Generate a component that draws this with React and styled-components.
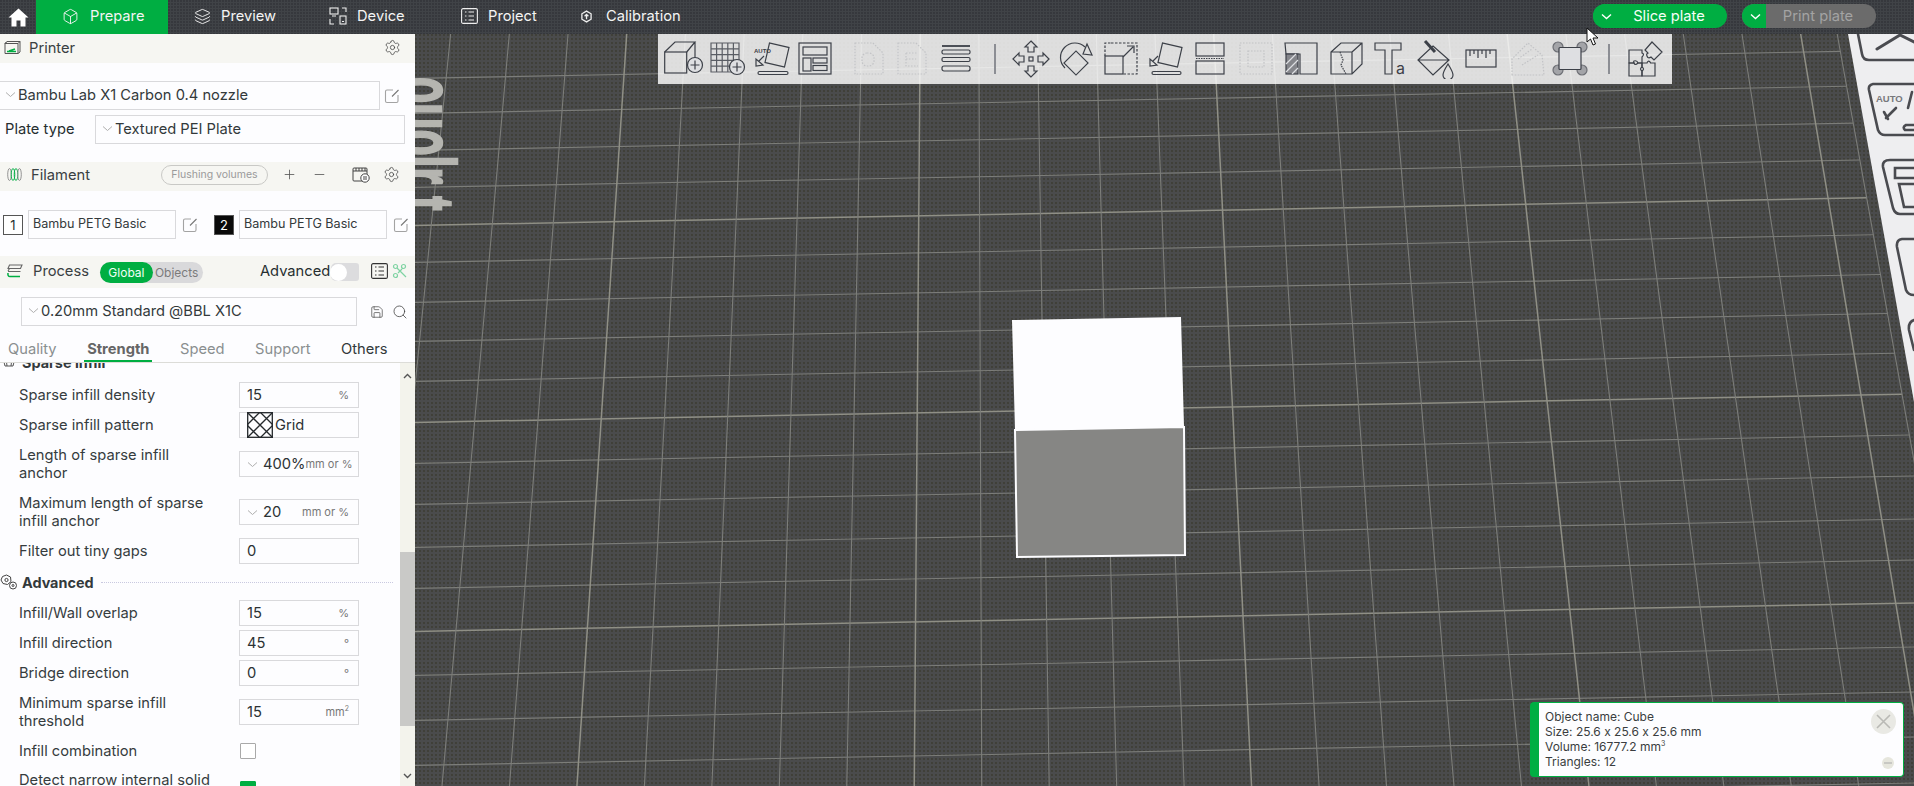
import React from "react";
import styled, { createGlobalStyle } from "styled-components";
import { Box, Layers, Settings, Save, Search, Plus, Minus } from "lucide-react";

const GREEN = "#00ae42";
const INK = "#262e30";
const EDGE = "#d9d9dc";
const BAND = "#f6f6f2";

const Global = createGlobalStyle`
  html, body { margin: 0; padding: 0; background: #4a4b4c; }
  * { box-sizing: border-box; }
  svg { flex: none; }
  body { font-family: Inter, "Noto Sans", sans-serif; color: ${INK}; font-feature-settings: "calt" 0; }
`;

const Page = styled.div`
  position: relative; width: 1914px; height: 786px; overflow: hidden;
  display: flex; flex-direction: column;
`;
const TopBar = styled.header`
  height: 34px; flex: none; display: flex; align-items: stretch;
  background-color: #404347;
  background-image: radial-gradient(circle at 1px 1px, #36383c .7px, transparent .9px);
  background-size: 3px 3px;
`;
const HomeBtn = styled.div`
  width: 36px; display: flex; align-items: center; justify-content: center;
`;
const MainTab = styled.div`
  width: ${p => p.$w}px; flex: none; display: flex; align-items: center;
  padding-left: ${p => p.$pad}px; gap: ${p => p.$gap}px; padding-bottom: 2px;
  font-size: 14.7px; color: #f4f4f4;
  background: ${p => (p.$active ? GREEN : "transparent")};
`;
const TopRight = styled.div`
  margin-left: auto; padding: 0 38px 2px 0; display: flex; align-items: center; gap: 15px;
`;
const SplitBtn = styled.div`
  width: 134px; height: 24px; border-radius: 12px; overflow: hidden; display: flex;
  font-size: 14.7px; background: ${p => (p.$off ? "#6b6b6b" : GREEN)};
  color: ${p => (p.$off ? "#a3a3a3" : "#f4fff6")};
`;
const SplitArrow = styled.div`
  width: 24px; flex: none; background: ${GREEN}; display: flex; align-items: center; justify-content: center; padding-left: 3px;
`;
const SplitLabel = styled.div`
  flex: 1; display: flex; align-items: center; justify-content: center; padding-right: 6px;
`;
const Body = styled.div`flex: 1; display: flex; min-height: 0;`;
const Side = styled.aside`
  width: 415px; flex: none; background: #fdfdff; display: flex; flex-direction: column; overflow: hidden;
`;
const Head = styled.div`
  height: ${p => p.$h || 29}px; flex: none; display: flex; align-items: center; background: ${BAND};
  font-size: 14.7px; margin-top: ${p => p.$top || 0}px; padding: 0 ${p => p.$right}px ${p => p.$lift || 2}px ${p => p.$pad}px;
`;
const HeadTitle = styled.span`margin-left: ${p => p.$ml}px; color: #3a4042; flex: none;`;
const Push = styled.span`margin-left: auto; display: flex; align-items: center;`;
const Tail = styled.span`display: flex; align-items: center; flex: none; margin-left: ${p => p.$ml || 0}px;`;
const Pill = styled.span`
  margin-left: 71px; height: 20px; width: 107px; flex: none; border: 1px solid #c9c9c6; border-radius: 10px;
  font-size: 10.5px; color: #9a9a9a; display: flex; align-items: center; justify-content: center; white-space: nowrap;
`;
const Seg = styled.span`
  margin: 2px 0 0 11px; width: 103px; height: 21px; flex: none; border-radius: 11px; background: #d9d9db; display: flex; align-items: center;
  font-size: 12px; color: #7b7b7b;
`;
const SegOn = styled.span`
  width: 53px; height: 21px; border-radius: 11px; background: ${GREEN}; color: #f2fff6; display: flex; align-items: center; justify-content: center;
`;
const SegOff = styled.span`margin-left: 2px;`;
const Switch = styled.span`
  margin: 2px 0 0 1px; width: 28px; height: 18px; flex: none; border-radius: 5px 3px 3px 5px; background: #dcdcde; display: flex; align-items: center;
`;
const Knob = styled.span`width: 17px; height: 17px; border-radius: 50%; background: #fff; margin-left: -1px;`;
const PickRow = styled.div`
  display: flex; align-items: center; flex: none; margin-top: ${p => p.$top}px; padding-left: ${p => p.$pad || 0}px;
`;
const PlateLabel = styled.span`width: 90px; font-size: 14.7px; padding-bottom: 2px;`;
const Combo = styled.div`
  height: 29px; width: ${p => p.$w}px; margin-left: ${p => p.$ml || 0}px; flex: none;
  border: 1px solid ${EDGE}; display: flex; align-items: center; padding: 0 0 2px ${p => p.$pad || 5}px;
  font-size: ${p => p.$fs || 14.7}px; white-space: nowrap; color: #33393b;
`;
const ComboText = styled.span`margin-left: 2px;`;
const NumBox = styled.span`
  width: 20px; height: 20px; flex: none; margin-left: ${p => p.$ml}px; display: flex; align-items: center; justify-content: center; font-size: 13px;
  border: 1px solid #555; background: ${p => (p.$dark ? "#0a0a0a" : "#fff")}; color: ${p => (p.$dark ? "#fff" : INK)};
`;
const IconSlot = styled.span`display: flex; margin-left: ${p => p.$ml}px;`;
const Tabs = styled.nav`
  height: 37px; flex: none; display: flex; align-items: stretch; gap: 30.5px; padding-left: 8px; border-bottom: 1px solid #dcdcd8; font-size: 14.7px;
`;
const Tab = styled.span`
  position: relative; display: flex; align-items: center; padding-top: 9px;
  color: ${p => p.$c}; font-weight: ${p => (p.$on ? 700 : 400)};
  ${p => p.$on ? `&::after { content: ""; position: absolute; left: -3px; right: -3px; bottom: 0; height: 2px; background: ${GREEN}; }` : ""}
`;
const Scroller = styled.div`flex: 1; min-height: 0; display: flex;`;
const ScrollContent = styled.div`flex: 1; overflow: hidden;`;
const Group = styled.div`
  height: 22px; display: flex; align-items: center; font-size: 14.4px; font-weight: 700; color: #33393b;
  margin-top: ${p => p.$top}px; padding: 0 7px 2px 0;
`;
const GroupName = styled.span`margin-left: 4px; white-space: nowrap;`;
const Dots = styled.span`flex: 1; border-top: 1px dotted #c9c9e0; margin-left: 7px;`;
const Row = styled.div`
  display: flex; align-items: center; min-height: 26px; margin-top: ${p => p.$top}px; padding-left: 19px; font-size: 14.7px; color: #363c3e;
`;
const Label = styled.div`width: 220px; flex: none; white-space: pre-line; line-height: 18px;`;
const Field = styled.div`
  width: 120px; height: 26px; flex: none; border: 1px solid ${EDGE}; display: flex; align-items: center; padding: 0 9px 0 7px; font-size: 14.7px; color: #2c3234;
`;
const Val = styled.span`margin-left: ${p => p.$ml || 0}px;`;
const Unit = styled.span`margin-left: auto; font-size: 11px; color: #777; white-space: nowrap;`;
const Patt = styled.span`display: flex; margin-right: 2px;`;
const Check = styled.div`
  width: 16px; height: 16px; margin-left: 1px; border: 1px solid ${p => (p.$on ? GREEN : "#a9a9a9")}; background: ${p => (p.$on ? GREEN : "#fff")}; border-radius: 1px;
`;
const ScrollBar = styled.div`
  width: 15px; flex: none; background: #f3f3ec; display: flex; flex-direction: column; align-items: center; padding-top: 10px;
`;
const Thumb = styled.div`width: 15px; height: 174px; margin-top: 173px; background: #c9c9c7;`;
const DownArrow = styled.span`display: flex; margin-top: 47px;`;
const Canvas = styled.main`
  position: relative; flex: 1; overflow: hidden; background-color: #4a4b4c;
  background-image: radial-gradient(circle at 1px 1px, #3f3f38 .7px, transparent .9px);
  background-size: 4px 4px;
`;
const Scene = styled.svg`position: absolute; inset: 0; width: 100%; height: 100%;`;
const Toolbar = styled.div`
  position: absolute; left: 243px; top: 0; width: 1014px; height: 50px; padding-left: 6px;
  background: rgba(255,255,255,.82); display: flex; align-items: center;
`;
const Tool = styled.svg`
  width: 40px; height: 40px; flex: none; fill: none; stroke: #3c4048; stroke-width: 1.2;
  margin-left: ${p => p.$ml}px;
`;
const Sep = styled.span`
  width: 1.5px; height: 30px; flex: none; background: #8c8e94; margin-left: ${p => p.$ml}px;
`;
const Toast = styled.div`
  position: absolute; right: 10px; bottom: 9px; width: 374px; height: 75px; border-radius: 4px;
  background: #fdfdff; border: 1px solid ${GREEN}; border-left: 9px solid ${GREEN}; padding: 6px 0 0 6px;
  font-size: 12px; line-height: 15px; color: #3a3d40;
`;
const ToastLine = styled.div`white-space: nowrap;`;
const Sup = styled.sup`font-size: 7px; line-height: 0;`;
const CloseBtn = styled.div`
  position: absolute; right: 7px; top: 6px; width: 25px; height: 25px; border-radius: 50%; background: #e9e9e4;
  display: flex; align-items: center; justify-content: center;
`;
const MinBtn = styled.div`
  position: absolute; right: 9px; bottom: 7px; width: 12px; height: 12px; border-radius: 50%; background: #e6e6dd; display: flex; align-items: center; justify-content: center;
`;
const Pointer = styled.svg`position: absolute; left: 1586px; top: 27px; width: 13px; height: 19px;`;

const Chev = ({ s = 11, c = "#aeaeae", w = 1 }) => (
  <svg width={s} height={s} viewBox="0 0 11 11" fill="none" stroke={c} strokeWidth={w}><path d="M1 3.5 L5.5 7.5 L10 3.5" /></svg>
);
const EditIcon = () => (
  <svg width="16" height="16" viewBox="0 0 16 16" fill="none" stroke="#a3a3a3" strokeWidth="1.1">
    <path d="M9 2 H3 Q1.5 2 1.5 3.5 V13 Q1.5 14.5 3 14.5 H12.5 Q14 14.5 14 13 V7" /><path d="M8 8.5 L14.5 2" stroke="#777" />
  </svg>
);
const HomeIcon = () => (
  <svg width="21" height="19" viewBox="0 0 21 19" fill="#fff"><path d="M10.5 0.5 L20.5 9.5 H17.5 V18.5 H12.5 V12.5 H8.5 V18.5 H3.5 V9.5 H0.5 Z" /></svg>
);
const DeviceIcon = () => (
  <svg width="18" height="18" viewBox="0 0 18 18" fill="none" stroke="#eee" strokeWidth="1.1">
    <rect x="1" y="1" width="8" height="6" /><path d="M3 9 H7 M13 1 H17 V5 M1 12 V17 H5" /><rect x="11" y="9" width="6" height="8" /><path d="M13 14.5 H15" />
  </svg>
);
const ProjectIcon = () => (
  <svg width="17" height="16" viewBox="0 0 17 16" fill="none" stroke="#eee" strokeWidth="1.1">
    <rect x="0.6" y="0.6" width="15.8" height="14.8" rx="1.5" /><path d="M4 4 H5.5 M4 8 H5.5 M4 12 H5.5 M7.5 4 H13 M7.5 8 H13 M7.5 12 H13" />
  </svg>
);
const CalibIcon = () => (
  <svg width="13" height="13" viewBox="0 0 24 24" fill="none" stroke="#eee" strokeWidth="2.4">
    <path d="M12 2 L20.5 7 V17 L12 22 L3.5 17 V7 Z" /><path d="M12 17 V8 M8.5 11.5 L12 8 L15.5 11.5" />
  </svg>
);
const PrinterIcon = () => (
  <svg width="17" height="15" viewBox="0 0 17 15" fill="none" stroke="#555" strokeWidth="1">
    <path d="M3 1.5 H16 V12 L14 13.5 H1 V3.5 Z M3 1.5 L1 3.5 H14 V13.5 M14 3.5 L16 1.5" /><path d="M3 11.5 H12 M5 11 L11 9" stroke={GREEN} strokeWidth="1.6" />
  </svg>
);
const FilamentIcon = () => (
  <svg width="15" height="15" viewBox="0 0 15 15" fill="none" strokeWidth="0.9">
    <ellipse cx="2.5" cy="7.5" rx="1.8" ry="6" stroke="#888" /><ellipse cx="6" cy="7.5" rx="1.8" ry="6" stroke={GREEN} /><ellipse cx="9" cy="7.5" rx="1.8" ry="6" stroke={GREEN} /><ellipse cx="12.5" cy="7.5" rx="1.8" ry="6" stroke="#888" />
  </svg>
);
const ProcessIcon = () => (
  <svg width="16" height="14" viewBox="0 0 16 14" fill="none" stroke="#666" strokeWidth="1.1">
    <path d="M2.5 1 H15 L13.5 4.5 H1 Z" /><path d="M1 7 L2.5 4.5 M13.5 7.5 H1" /><path d="M1 9 Q0.5 12.5 3 12.5 H13" stroke={GREEN} strokeWidth="1.5" />
  </svg>
);
const FlushIcon = () => (
  <svg width="18" height="16" viewBox="0 0 18 16" fill="none" stroke="#444" strokeWidth="1">
    <rect x="1" y="1" width="14" height="13" rx="1" /><path d="M1 4 H15 M4 1 V4 M7 1 V4 M10 1 V4 M13 1 V4" /><circle cx="13" cy="11" r="4.2" fill="#fff" /><path d="M11 10 H15 M11 12 H15" />
  </svg>
);
const ListIcon = () => (
  <svg width="17" height="16" viewBox="0 0 17 16" fill="none" stroke="#333" strokeWidth="1.1">
    <rect x="0.6" y="0.6" width="15.8" height="14.8" rx="1.5" /><path d="M4 4 H5.5 M4 8 H5.5 M4 12 H5.5 M7.5 4 H13 M7.5 8 H13 M7.5 12 H13" />
  </svg>
);
const TuneIcon = () => (
  <svg width="15" height="16" viewBox="0 0 15 16" fill="none" stroke="#7ed3a2" strokeWidth="1.2">
    <circle cx="3.5" cy="3.5" r="2" /><circle cx="11.5" cy="3.5" r="2" /><circle cx="3.5" cy="12.5" r="2" /><path d="M5 5 L14 14 M10 6 L6 10" />
  </svg>
);
const AdvGears = () => (
  <svg width="18" height="16" viewBox="0 0 18 16" fill="none" stroke="#444" strokeWidth="1">
    <path d="M6.5 1 L10.5 3 L11 7.5 L7.5 10.5 L3 9.5 L1 6 L2.5 2.5 Z" /><circle cx="6.5" cy="6" r="1.6" /><circle cx="13" cy="11.5" r="3.5" /><circle cx="13" cy="11.5" r="1" />
  </svg>
);
const SparseIcon = () => (
  <svg width="18" height="16" viewBox="0 0 18 16" fill="none" stroke="#555" strokeWidth="1"><path d="M3 4 H15 L13 12 H5 Z M6 4 L7 12 M12 4 L11 12" /></svg>
);
const Hatch = () => (
  <svg width="26" height="26" viewBox="0 0 26 26" fill="none" stroke="#24282c" strokeWidth="1.3">
    <rect x="0.7" y="0.7" width="24.6" height="24.6" /><path d="M0 13 L13 0 L26 13 L13 26 Z M0 0 L26 26 M26 0 L0 26" />
  </svg>
);

const filled = { fill: "#3c4048", stroke: "none" };
const faded = { stroke: "#c2c3c6", strokeDasharray: "1.5 1.5" };
const cover = { fill: "#dedfe2" };
const corner = { fill: "#a3a4a8", stroke: "#6d6f75" };

const tools = [
  { c: 684, d: <><rect x="0.7" y="13" width="22" height="21" /><path d="M0.7 13 L11 3 H31 L22.7 13 M31 3 V20" /><circle cx="31" cy="26" r="7.5" {...cover} /><path d="M26.5 26 H35.5 M31 21.5 V30.5" /></> },
  { c: 727, d: <><path d="M4 4 H32 V33 H4 Z M9.6 4 V33 M15.2 4 V33 M20.8 4 V33 M26.4 4 V33 M4 9.8 H32 M4 15.6 H32 M4 21.4 H32 M4 27.2 H32" stroke="#5a5d64" /><circle cx="30" cy="28" r="7.5" {...cover} /><path d="M25.5 28 H34.5 M30 23.5 V32.5" /></> },
  { c: 772, d: <><rect x="15" y="6" width="20" height="20" transform="rotate(13 25 16)" /><text x="2" y="14" fontFamily="Liberation Sans, sans-serif" fontSize="6" fontWeight="700" {...filled}>AUTO</text><path d="M12 17 L7 22 M4 20 L4 27 L11 26 Z" /><rect x="6" y="32.5" width="30" height="3" rx="1.5" /></> },
  { c: 815, d: <><rect x="4" y="4" width="32" height="31" /><rect x="8" y="8" width="24" height="8" /><rect x="8" y="19" width="8" height="13" /><rect x="18" y="19" width="14" height="5" /><rect x="18" y="26.5" width="14" height="5" /></> },
  { c: 869, d: <g {...faded}><path d="M6 4 H24 L34 14 V35 H6 Z" /><rect x="13" y="14" width="12" height="13" rx="5" /></g> },
  { c: 912, d: <g {...faded}><path d="M6 4 H24 L34 14 V35 H6 Z" /><path d="M14 14 H26 M14 14 V27 H26 M14 20 H24" /></g> },
  { c: 956, d: <><path d="M6 7 H34" strokeWidth="1.8" /><rect x="6" y="11" width="28" height="4" rx="1.5" /><rect x="6" y="18.5" width="28" height="4" rx="1.5" /><rect x="6" y="27" width="28" height="5" rx="2" /></> },
  { c: 995, sep: true },
  { c: 1031, d: <><rect x="18" y="18" width="4" height="4" />{[0, 90, 180, 270].map(a => <path key={a} transform={`rotate(${a} 20 20)`} d="M20 2 L26 8 H23 V13 H17 V8 H14 Z" />)}</> },
  { c: 1076, d: <><path d="M9 29 A14 14 0 0 1 29 8" /><path d="M31 5 L36 16 L27 15 Z" /><rect x="11.5" y="15.5" width="17" height="17" transform="rotate(45 20 24)" /></> },
  { c: 1121, d: <><path d="M10 4 H36 V35 H22 M4 17 V4 H10" strokeDasharray="2.5 1.5" /><rect x="4" y="17" width="18" height="18" /><path d="M22 18 L32 8 M26 7 H33 V14" /></> },
  { c: 1166, d: <><rect x="14" y="6" width="20" height="20" transform="rotate(13 24 16)" /><path d="M12 17 L7 22 M4 20 L4 27 L11 26 Z" /><rect x="6" y="32.5" width="29" height="3" rx="1.5" /></> },
  { c: 1210, d: <><rect x="6" y="4" width="28" height="13" /><rect x="6" y="22" width="28" height="13" /><path d="M6 19.5 H34" strokeDasharray="1.5 1" /></> },
  { c: 1256, d: <g {...faded}><rect x="4" y="4" width="32" height="31" /><rect x="12" y="12" width="16" height="16" /></g> },
  { c: 1301, d: <><path d="M4 4 H36 V35 H19 V15 H5 Z" /><rect x="5" y="15" width="12" height="20" fill="#85868b" /><path d="M5 25 L15 15 M5 33 L17 21 M11 35 L17 29" stroke="#dedfe2" /></> },
  { c: 1346, d: <><path d="M5 13 L15 4 H36 V25 L26 35 H5 Z M5 13 H26 V35 M26 13 L36 4" /><path d="M14 13 L17 21 L15 26 L20 35" strokeDasharray="1.5 1" /></> },
  { c: 1391, d: <><path d="M4 4 H30 V11 H21 V35 H14 V11 H4 Z" /><text x="25" y="35" fontFamily="Inter, sans-serif" fontSize="16" {...filled}>a</text></> },
  { c: 1436, d: <><path d="M17 7 L33 21 L17 36 L2 21 Z M2 21 H33" /><path d="M9 2 L19 13" strokeWidth="3" /><path d="M32 25 Q27 33 27 36 A5 5 0 0 0 37 36 Q37 33 32 25 Z" /></> },
  { c: 1481, d: <><rect x="5" y="11" width="30" height="17" /><path d="M9 11 V17 M13 11 V15 M17 11 V19 M21 11 V15 M25 11 V19 M29 11 V15" /></> },
  { c: 1528, d: <g {...faded}><path d="M4 36 V20 L20 4 L34 16 L36 36 Z M10 20 L24 10 M14 26 L30 16" /></g> },
  { c: 1570, d: <><circle cx="8" cy="8" r="5" {...corner} /><circle cx="32" cy="8" r="5" {...corner} /><circle cx="8" cy="31" r="5" {...corner} /><circle cx="32" cy="31" r="5" {...corner} /><rect x="9" y="8.5" width="22" height="22" rx="1" {...cover} /></> },
  { c: 1609, sep: true },
  { c: 1645, d: <><path d="M4 11 H17 V14 Q20 15 17 18 V24 H13 Q12 21 9 22 Q8 23 9 24 H4 Z" /><path d="M4 24 H9 Q10 27 13 24 H17 V28 Q14 30 17 32 V37 H4 Z" /><path d="M17 24 H22 Q23 21 25 23 Q26 24 25 24 H30 V37 H17 V32 Q20 30 17 28 Z" /><path d="M27 3 L37 13 L29 21 L26 18 Q23 20 22 17 Q21 15 23 14 L20 11 Z" /></> },
];

const hy = [73, 108, 145, 182, 220, 257, 297, 336, 376, 417, 458, 499, 542, 583, 626, 670, 715, 760, 806];
const vx = Array.from({ length: 24 }, (_, i) => 448 + 59 * i);
const bandAt = y => 1848 + (y - 34) * 0.18;
const edgeAt = y => 1837 + (y - 33) * 0.18;
const vAt = (x60, y) => 960 + ((x60 - 960) * (y + 5000)) / 5060;
const SLOPE = 0.019;
const rightEnd = y700 => {
  const y = y700 - SLOPE * 1150;
  const x = edgeAt(y);
  return Math.min(x, 1914);
};

const Grid = () => (
  <g fill="none">
    {hy.map((y, i) => {
      const x2 = rightEnd(y);
      return <line key={i} x1="400" y1={y + SLOPE * 300} x2={x2} y2={y - SLOPE * (x2 - 700)} stroke={i % 5 === 4 ? "#8f8f85" : "#7c7d79"} strokeWidth={i % 5 === 4 ? 1.5 : 1.1} />;
    })}
    {vx.map((x, i) => (
      <line key={i} x1={vAt(x, 34)} y1="34" x2={vAt(x, 786)} y2="786" stroke={i % 5 === 3 ? "#8f8f85" : "#7c7d79"} strokeWidth={i % 5 === 3 ? 1.5 : 1.1} />
    ))}
    <line x1={edgeAt(34)} y1="34" x2={edgeAt(500)} y2="500" stroke="#7c7d79" strokeWidth="1.1" />
  </g>
);

const PlateGlyphs = () => (
  <text transform="translate(400 77) rotate(90) scale(.55 1)" fontFamily="Liberation Sans, sans-serif" fontWeight="700" fontSize="78" fill="#b5b5b0" stroke="#b5b5b0" strokeWidth="2.5">ouolr  t</text>
);

const RightBand = () => (
  <g>
    <polygon points={`${bandAt(34)},34 1914,34 1914,402`} fill="#eeeef0" />
    <g fill="none" stroke="#4a4b50" strokeWidth="2.6" strokeLinecap="round">
      <path d="M1858 34 L1862 54 Q1863 60 1869 60 H1914" />
      <path d="M1877 49 L1900 35 L1914 42" strokeWidth="3" />
      <path d="M1914 84 H1873 Q1868 85 1869 90 L1878 130 Q1880 135 1885 135 H1914" />
      <path d="M1914 168 H1895 V178 H1914 M1914 184 H1899 L1904 207 H1914" />
      <path d="M1914 160 H1890 Q1882 160 1883 167 L1893 208 Q1895 214 1900 214 H1914" />
      <path d="M1914 239 H1902 Q1896 240 1897 247 L1906 290 Q1908 295 1914 295" />
      <path d="M1914 320 Q1908 322 1909 330 L1914 350" />
      <path d="M1914 125 H1906 Q1902 127 1905 130 H1914" />
      <path d="M1908 108 L1912 92" />
      <path d="M1886 118 L1896 108 M1884 112 L1888 119" />
    </g>
    <text x="1876" y="102" fontFamily="Liberation Sans, sans-serif" fontWeight="700" fontSize="9.5" fill="#77787c">AUTO</text>
  </g>
);

const Cube = () => (
  <g>
    <polygon points="1012,320 1181,317 1184,427 1015,430" fill="#fdfdff" />
    <polygon points="1015,430 1184,427 1185,555 1017,557" fill="#868684" stroke="#fdfdff" strokeWidth="2" />
  </g>
);

const rows = [
  { k: "g1", group: "Sparse infill", top: -11, icon: <SparseIcon /> },
  { k: "a", label: "Sparse infill density", top: 8, val: "15", unit: "%" },
  { k: "b", label: "Sparse infill pattern", top: 4, grid: true },
  { k: "c", label: "Length of sparse infill\nanchor", top: 8, val: "400%", unit: "mm or %", combo: true },
  { k: "d", label: "Maximum length of sparse\ninfill anchor", top: 12, val: "20", unit: "mm or %", combo: true },
  { k: "e", label: "Filter out tiny gaps", top: 8, val: "0" },
  { k: "g2", group: "Advanced", top: 8, icon: <AdvGears />, dots: true },
  { k: "f", label: "Infill/Wall overlap", top: 6, val: "15", unit: "%" },
  { k: "g", label: "Infill direction", top: 4, val: "45", unit: "°" },
  { k: "h", label: "Bridge direction", top: 4, val: "0", unit: "°" },
  { k: "i", label: "Minimum sparse infill\nthreshold", top: 8, val: "15", unit: <>mm<Sup>2</Sup></> },
  { k: "j", label: "Infill combination", top: 8, check: "off" },
  { k: "l", label: "Detect narrow internal solid\ninfill", top: 7, check: "on" },
];

const SettingRow = ({ r }) => {
  if (r.group) {
    return (
      <Group $top={r.top}>
        {r.icon}
        <GroupName>{r.group}</GroupName>
        {r.dots && <Dots />}
      </Group>
    );
  }
  return (
    <Row $top={r.top}>
      <Label>{r.label}</Label>
      {r.check ? <Check $on={r.check === "on"} /> : (
        <Field>
          {r.combo && <Chev />}
          {r.grid && <Patt><Hatch /></Patt>}
          {r.grid ? "Grid" : <Val $ml={r.combo ? 5 : 0}>{r.val}</Val>}
          {r.unit && <Unit>{r.unit}</Unit>}
        </Field>
      )}
    </Row>
  );
};

export default function App() {
  return (
    <Page>
      <Global />
      <TopBar>
        <HomeBtn><HomeIcon /></HomeBtn>
        <MainTab $w={132} $pad={26} $gap={11} $active><Box size={17} strokeWidth={1.3} />Prepare</MainTab>
        <MainTab $w={121} $pad={26} $gap={10}><Layers size={17} strokeWidth={1.3} />Preview</MainTab>
        <MainTab $w={132} $pad={40} $gap={10}><DeviceIcon />Device</MainTab>
        <MainTab $w={119} $pad={40} $gap={10}><ProjectIcon />Project</MainTab>
        <MainTab $w={180} $pad={40} $gap={13}><CalibIcon />Calibration</MainTab>
        <TopRight>
          <SplitBtn><SplitArrow><Chev c="#fff" w={1.4} /></SplitArrow><SplitLabel>Slice plate</SplitLabel></SplitBtn>
          <SplitBtn $off><SplitArrow><Chev c="#fff" w={1.4} /></SplitArrow><SplitLabel>Print plate</SplitLabel></SplitBtn>
        </TopRight>
      </TopBar>
      <Body>
        <Side>
          <Head $pad={4} $right={14}>
            <PrinterIcon /><HeadTitle $ml={8}>Printer</HeadTitle>
            <Push><Settings size={17} strokeWidth={1.1} color="#444" /></Push>
          </Head>
          <PickRow $top={18}>
            <Combo $w={381} $ml={-1}><Chev /><ComboText>Bambu Lab X1 Carbon 0.4 nozzle</ComboText></Combo>
            <IconSlot $ml={4}><EditIcon /></IconSlot>
          </PickRow>
          <PickRow $top={5} $pad={5}>
            <PlateLabel>Plate type</PlateLabel>
            <Combo $w={310} $pad={6}><Chev /><ComboText>Textured PEI Plate</ComboText></Combo>
          </PickRow>
          <Head $top={18} $pad={7} $right={15} $lift={4}>
            <FilamentIcon /><HeadTitle $ml={9}>Filament</HeadTitle>
            <Pill>Flushing volumes</Pill>
            <Tail $ml={14}><Plus size={15} strokeWidth={1.3} color="#555" /></Tail>
            <Tail $ml={15}><Minus size={15} strokeWidth={1.3} color="#555" /></Tail>
            <Tail $ml={25}><FlushIcon /></Tail>
            <Push><Settings size={17} strokeWidth={1.1} color="#444" /></Push>
          </Head>
          <PickRow $top={19}>
            <NumBox $ml={3}>1</NumBox>
            <Combo $w={148} $ml={5} $fs={12.6} $pad={4}>Bambu PETG Basic</Combo>
            <IconSlot $ml={6}><EditIcon /></IconSlot>
            <NumBox $ml={16} $dark>2</NumBox>
            <Combo $w={148} $ml={5} $fs={12.6} $pad={4}>Bambu PETG Basic</Combo>
            <IconSlot $ml={6}><EditIcon /></IconSlot>
          </PickRow>
          <Head $top={17} $h={32} $pad={7} $right={9}>
            <ProcessIcon /><HeadTitle $ml={10}>Process</HeadTitle>
            <Seg><SegOn>Global</SegOn><SegOff>Objects</SegOff></Seg>
            <Tail $ml={57}>Advanced</Tail>
            <Switch><Knob /></Switch>
            <Tail $ml={12}><ListIcon /></Tail>
            <Tail $ml={4}><TuneIcon /></Tail>
          </Head>
          <PickRow $top={9} $pad={21}>
            <Combo $w={336} $pad={6}><Chev /><ComboText>0.20mm Standard @BBL X1C</ComboText></Combo>
            <IconSlot $ml={13}><Save size={14} strokeWidth={1.2} color="#444" /></IconSlot>
            <IconSlot $ml={8}><Search size={16} strokeWidth={1.2} color="#444" /></IconSlot>
          </PickRow>
          <Tabs>
            <Tab $c="#8a8f90">Quality</Tab>
            <Tab $c="#666" $on>Strength</Tab>
            <Tab $c="#8a8f90">Speed</Tab>
            <Tab $c="#8a8f90">Support</Tab>
            <Tab $c="#33393b">Others</Tab>
          </Tabs>
          <Scroller>
            <ScrollContent>
              {rows.map(r => <SettingRow key={r.k} r={r} />)}
            </ScrollContent>
            <ScrollBar>
              <svg width="9" height="6" viewBox="0 0 9 6" fill="none" stroke="#555" strokeWidth="1.4"><path d="M1 5 L4.5 1.5 L8 5" /></svg>
              <Thumb />
              <DownArrow><svg width="9" height="6" viewBox="0 0 9 6" fill="none" stroke="#555" strokeWidth="1.4"><path d="M1 1 L4.5 4.5 L8 1" /></svg></DownArrow>
            </ScrollBar>
          </Scroller>
        </Side>
        <Canvas>
          <Scene viewBox="415 34 1499 752" preserveAspectRatio="none">
            <Grid />
            <PlateGlyphs />
            <RightBand />
            <Cube />
          </Scene>
          <Toolbar>
            {tools.map((t, i) => {
              const prev = i ? tools[i - 1] : null;
              const left = prev ? t.c - prev.c - (prev.sep ? 0.75 : 20) - (t.sep ? 0.75 : 20) : 0;
              return t.sep
                ? <Sep key={t.c} $ml={left} />
                : <Tool key={t.c} $ml={left} viewBox="0 0 40 40">{t.d}</Tool>;
            })}
          </Toolbar>
          <Toast>
            <ToastLine>Object name: Cube</ToastLine>
            <ToastLine>Size: 25.6 x 25.6 x 25.6 mm</ToastLine>
            <ToastLine>Volume: 16777.2 mm<Sup>3</Sup></ToastLine>
            <ToastLine>Triangles: 12</ToastLine>
            <CloseBtn><svg width="15" height="15" viewBox="0 0 15 15" stroke="#b9b9b5" strokeWidth="1.6"><path d="M1 1 L14 14 M14 1 L1 14" /></svg></CloseBtn>
            <MinBtn><svg width="8" height="2" viewBox="0 0 8 2" stroke="#aaa"><path d="M0 1 H8" /></svg></MinBtn>
          </Toast>
        </Canvas>
      </Body>
      <Pointer viewBox="0 0 13 19"><path d="M1 1 L1 15 L4.5 12 L7 18 L9.5 17 L7 11 L12 11 Z" fill="#fff" stroke="#111" strokeWidth="1" /></Pointer>
    </Page>
  );
}
